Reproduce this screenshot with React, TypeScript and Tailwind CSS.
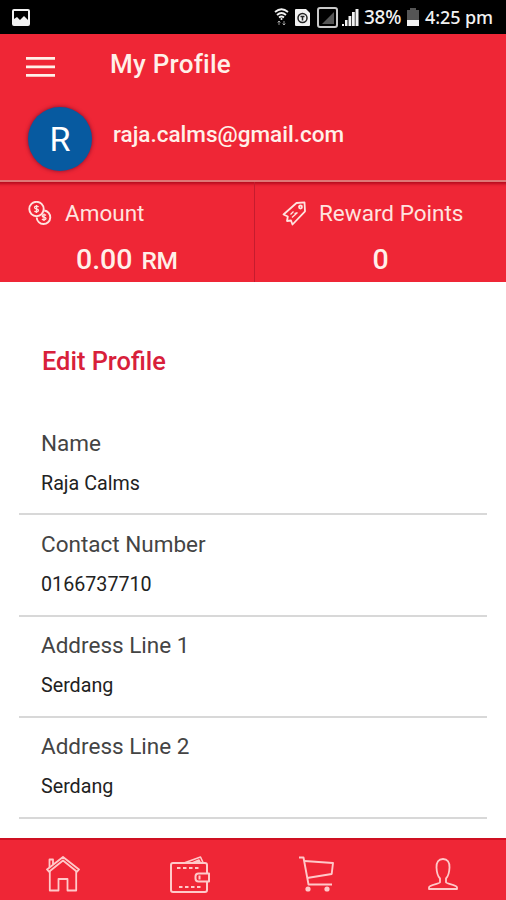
import React from 'react';

const FIELDS = [
  { label: 'Name', value: 'Raja Calms' },
  { label: 'Contact Number', value: '0166737710' },
  { label: 'Address Line 1', value: 'Serdang' },
  { label: 'Address Line 2', value: 'Serdang' },
  { label: 'Postal Code', value: '' },
];

const StatusBar: React.FC = () => (
  <div className="h-[34px] shrink-0 bg-black flex items-center justify-between pl-3 pr-[13px] text-[#f2f2f2]">
    <svg width="18" height="17" viewBox="0 0 18 17">
      <path fillRule="evenodd" fill="currentColor" d="M2 0h14a2 2 0 0 1 2 2v13a2 2 0 0 1-2 2H2a2 2 0 0 1-2-2V2a2 2 0 0 1 2-2Zm0 2v8l3-2 3 3 4-4 4 4V2Z" />
    </svg>
    <div className="flex items-center">
      <svg className="mr-[6px]" width="15" height="18" viewBox="0 0 15 18" fill="none" stroke="currentColor">
        <path d="M1 4Q7.500-1.500 14 4M3 7Q7.500 3 12 7M5 9.500Q7.500 7.500 10 9.500" strokeWidth="1.800" />
        <circle cx="7.500" cy="11" r="1" fill="currentColor" stroke="none" />
        <path d="M5 17v-4M3.700 14.500 5 13l1.300 1.500M10 13v4M8.700 15.500l1.300 1.500 1.300-1.500" strokeWidth="1" opacity=".6" />
      </svg>
      <svg className="mr-[7px]" width="15" height="17" viewBox="0 0 15 17">
        <path d="M1 0h10l4 4v12a1 1 0 0 1-1 1H1a1 1 0 0 1-1-1V1a1 1 0 0 1 1-1Z" fill="currentColor" />
        <circle cx="7.500" cy="9" r="4.500" fill="none" stroke="#222" strokeWidth="1.500" />
        <path d="M5.500 7.500h4M7.500 7.500v4" stroke="#222" strokeWidth="1.500" />
      </svg>
      <svg className="mr-[3px]" width="21" height="21" viewBox="0 0 21 21">
        <rect x="1" y="1" width="19" height="19" rx="2" fill="none" stroke="#c9c9c9" strokeWidth="2" />
        <path d="M17 5v12H5Z" fill="#555" />
      </svg>
      <svg className="mr-[5px]" width="18" height="19" viewBox="0 0 18 19" fill="currentColor">
        <path d="M1 16h2v2H1ZM4 12h2.500v6H4ZM7.500 8h2.800v10H7.500ZM11 4h2.800v14H11ZM14.500 1h3v17h-3Z" />
      </svg>
      <span className="w-[39px] whitespace-nowrap font-['Noto_Sans',sans-serif] text-[19px] leading-none font-medium tracking-[-0.300px]">38%</span>
      <svg className="ml-[4px] mr-[6px]" width="12" height="18" viewBox="0 0 12 18">
        <path d="M3 0h6v2h3v10H0V2h3Z" fill="#555" />
        <path d="M0 12h12v6H0Z" fill="currentColor" />
      </svg>
      <span className="w-[68px] whitespace-nowrap font-['Noto_Sans',sans-serif] text-[18px] leading-none font-medium tracking-[-0.100px]">4:25 pm</span>
    </div>
  </div>
);

const CoinsIcon: React.FC = () => (
  <svg width="24" height="25" viewBox="0 0 24 25" fill="none" stroke="currentColor" strokeWidth="1.900">
    <circle cx="8.500" cy="8" r="7.200" />
    <path d="M16.200 9.500a6.800 6.800 0 1 1-7.500 7" />
    <path d="M10.500 6c-1-1.300-4-1-4 .5 0 2 4 1 4 3 0 1.500-3 1.800-4 .5M8.500 4v8M18 14.500c-1-1.300-3.800-1-3.800.5 0 1.700 3.800.8 3.800 2.500 0 1.500-3 1.800-4 .5M16 12.500v7.500" strokeWidth="1.300" />
  </svg>
);

const TagIcon: React.FC = () => (
  <svg width="24" height="25" viewBox="0 0 24 25" fill="none" stroke="currentColor" strokeWidth="1.800" strokeLinejoin="round">
    <path d="M1.500 13.500 14.500 2l8-.7.500 9L10.500 23.500l-1.500-4-4 .5.800-4.500Z" />
    <circle cx="18.500" cy="6" r="1.500" />
    <path d="m8.500 13.500 3-3M10 16.500l5.500-5M12.500 12.500l3-1" strokeWidth="1.300" />
  </svg>
);

const HomeIcon: React.FC = () => (
  <svg width="34" height="36" viewBox="0 0 34 36" fill="none" stroke="currentColor" strokeWidth="1.800" strokeLinejoin="round">
    <path d="M1 13.500 17 1l16 12.500-2 2.200L17 4.500 3 15.700Z" />
    <path d="M3.500 11V3.500H7v4.800" />
    <path d="M3.800 15v19.500h8.700V23h9v11.500h8.700V15" />
  </svg>
);

const WalletIcon: React.FC = () => (
  <svg width="40" height="37" viewBox="0 0 40 37" fill="none" stroke="currentColor" strokeWidth="2" strokeLinejoin="round">
    <path d="M37 17V9a2 2 0 0 0-2-2H3a2 2 0 0 0-2 2v25a2 2 0 0 0 2 2h32a2 2 0 0 0 2-2v-8" />
    <path d="m14 7 16.500-6L33 6.500M22 7l7-3 1.500 3" strokeWidth="1.600" />
    <path d="M39 17.500H28.500a3 3 0 0 0-3 3v2a3 3 0 0 0 3 3H39ZM29.500 19.500v4" />
    <path d="M7 12h23M9 31h23" strokeDasharray="3.500 2.500" />
  </svg>
);

const CartIcon: React.FC = () => (
  <svg className="ml-[2px]" width="36" height="36" viewBox="0 0 36 36" fill="none" stroke="currentColor" strokeWidth="1.900" strokeLinejoin="round">
    <path d="M0 1.500h4.500L9.500 28.500H33" />
    <path d="m5.500 5 28.500 2-1.300 11L8 22" />
    <circle cx="9" cy="33" r="2.600" fill="currentColor" stroke="none" />
    <circle cx="28" cy="33" r="2.600" fill="currentColor" stroke="none" />
  </svg>
);

const UserIcon: React.FC = () => (
  <svg width="30" height="32" viewBox="0 0 30 32" fill="none" stroke="currentColor" strokeWidth="1.800" strokeLinejoin="round">
    <path d="M12 20.500C10 18.500 8.700 14.500 8.500 9.500 8.300 4 10.500 1 15 1s6.700 3 6.500 8.500c-.2 5-1.500 9-3.500 11v3.800c0 1.700 11 2 11 5.200V31H1v-1.500c0-3.200 11-3.500 11-5.200Z" />
  </svg>
);

const App: React.FC = () => {
  return (
    <div className="w-[506px] h-[900px] overflow-hidden flex flex-col bg-white font-['Roboto',sans-serif]">
      <StatusBar />

      <header className="h-[146px] shrink-0 bg-[#ef2636] text-[#fff0e9]">
        <div className="h-[66px] flex items-center pl-[26px]">
          <svg width="29" height="22" viewBox="0 0 29 22" fill="currentColor">
            <path d="M0 1h29v2.700H0ZM0 9.500h29v2.700H0ZM0 18h29v2.700H0Z" />
          </svg>
          <h1 className="ml-[55px] mb-[6px] text-[26px] leading-none font-medium tracking-[0.250px]">My Profile</h1>
        </div>
        <div className="h-[78px] flex items-center pl-7">
          <div className="w-[64px] h-[64px] rounded-full bg-[#075aa0] shadow-[0_0_4px_rgba(80,0,40,0.7)] flex items-center justify-center text-white text-[34px]">R</div>
          <span className="ml-[21px] mb-[9px] text-[22.500px] leading-none font-medium">raja.calms@gmail.com</span>
        </div>
      </header>

      <section className="h-[102px] shrink-0 border-t-2 border-[#df7777] bg-[#ef2636] text-[#ffe3df] flex shadow-[inset_0_5px_3px_-3px_#b50b1e]">
        <div className="w-[255px] border-r border-[#c51c2e]">
          <div className="h-[62px] pl-7 flex items-center">
            <CoinsIcon />
            <span className="ml-[13px] text-[22.500px] leading-none">Amount</span>
          </div>
          <div className="pl-[76px] text-[#fff0e9] font-medium text-[28.500px] leading-[31px] whitespace-nowrap">
            0.00 <span className="ml-[2px] text-[24.500px] tracking-[-0.500px]">RM</span>
          </div>
        </div>
        <div className="flex-1">
          <div className="h-[62px] pl-[27px] flex items-center">
            <TagIcon />
            <span className="ml-[13px] text-[22.500px] leading-none">Reward Points</span>
          </div>
          <div className="text-center text-[#fff0e9] font-medium text-[28.500px] leading-[31px]">0</div>
        </div>
      </section>

      <main className="flex-1 min-h-0 overflow-hidden px-[19px] pt-[64px]">
        <h2 className="pl-[23px] text-[25.400px] leading-[30px] font-medium text-[#d8203a]">Edit Profile</h2>
        <div className="mt-[38px]">
          {FIELDS.map((field) => (
            <div key={field.label} className="h-[101.300px] pl-[22px] pt-[15.500px] border-b-2 border-[#d8d8d8]">
              <div className="text-[22.500px] leading-[26px] text-[#444]">{field.label}</div>
              <div className="mt-[17px] text-[19.700px] leading-[22px] text-[#222]">{field.value}</div>
            </div>
          ))}
        </div>
      </main>

      <nav className="h-[62px] shrink-0 bg-[#ef2636] border-t-2 border-[#cf1022] text-[#ffc9c9] grid grid-cols-4 items-center justify-items-center pt-[8px]">
        <HomeIcon />
        <WalletIcon />
        <CartIcon />
        <UserIcon />
      </nav>
    </div>
  );
};

export default App;
